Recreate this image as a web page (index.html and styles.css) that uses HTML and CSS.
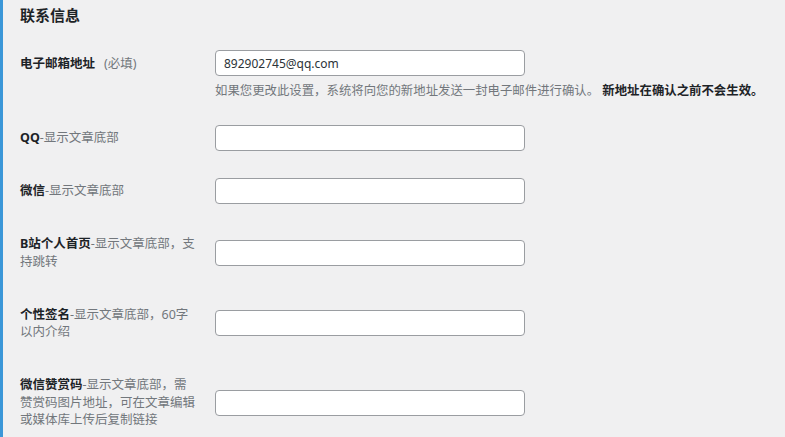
FILE: index.html
```html
<!DOCTYPE html>
<html lang="zh-CN">
<head>
<meta charset="utf-8">
<title>联系信息</title>
<link rel="stylesheet" href="styles.css">
</head>
<body>
<div class="page">
  <h2 class="section-title">联系信息</h2>
  <div class="form">
    <div class="row row-top">
      <div class="label"><span class="strong">电子邮箱地址</span><span class="req">(必填)</span></div>
      <div class="field field-top">
        <input class="text-input" type="text" value="892902745@qq.com">
        <p class="desc">如果您更改此设置，系统将向您的新地址发送一封电子邮件进行确认。 <span class="strong">新地址在确认之前不会生效。</span></p>
      </div>
    </div>
    <div class="row">
      <div class="label"><span class="strong">QQ</span><span class="muted">-显示文章底部</span></div>
      <div class="field"><input class="text-input" type="text"></div>
    </div>
    <div class="row">
      <div class="label"><span class="strong">微信</span><span class="muted">-显示文章底部</span></div>
      <div class="field"><input class="text-input" type="text"></div>
    </div>
    <div class="row">
      <div class="label"><span class="strong">B站个人首页</span><span class="muted">-显示文章底部，支</span><span class="muted">持跳转</span></div>
      <div class="field"><input class="text-input" type="text"></div>
    </div>
    <div class="row">
      <div class="label"><span class="strong">个性签名</span><span class="muted">-显示文章底部，60字</span><span class="muted">以内介绍</span></div>
      <div class="field"><input class="text-input" type="text"></div>
    </div>
    <div class="row">
      <div class="label"><span class="strong">微信赞赏码</span><span class="muted">-显示文章底部，需</span><span class="muted">赞赏码图片地址，可在文章编辑</span><span class="muted">或媒体库上传后复制链接</span></div>
      <div class="field"><input class="text-input" type="text"></div>
    </div>
  </div>
</div>
</body>
</html>
```
FILE: styles.css
```css
html, body {
  margin: 0;
  padding: 0;
  background: #f0f0f1;
}

body {
  font-family: "Noto Sans", "Noto Sans CJK SC", sans-serif;
  color: #1d2327;
  font-size: 12.5px;
}

.page {
  min-height: 437px;
  box-sizing: border-box;
  border-left: 3px solid #3b97d8;
  padding-left: 17px;
  padding-top: 5px;
}

.section-title {
  margin: 0 0 12.5px;
  font-size: 15px;
  line-height: 20px;
  font-weight: 700;
  color: #1d2327;
}

.form {
  display: flex;
  flex-direction: column;
}

.row {
  display: flex;
  align-items: center;
}

.row-top {
  align-items: flex-start;
}

.label {
  width: 177px;
  flex: none;
  padding: 17.75px 18px 17.75px 0;
  line-height: 17.5px;
}

.strong {
  font-weight: 700;
  color: #1d2327;
}

.muted {
  color: #72777c;
}

.req {
  color: #72777c;
  margin-left: 9px;
}

.field {
  flex: none;
}

.field-top {
  padding: 12.5px 0 11.75px;
}

.text-input {
  display: block;
  box-sizing: border-box;
  width: 310px;
  height: 26px;
  margin: 0;
  padding: 0 8px;
  border: 1px solid #9a9da1;
  border-radius: 4px;
  background: #fff;
  font-family: "Noto Sans", sans-serif;
  font-size: 12px;
  color: #2c3338;
  outline: none;
}

.desc {
  margin: 6.25px 0 0;
  font-size: 12.4px;
  line-height: 17.5px;
  color: #72777c;
  white-space: nowrap;
}
```
